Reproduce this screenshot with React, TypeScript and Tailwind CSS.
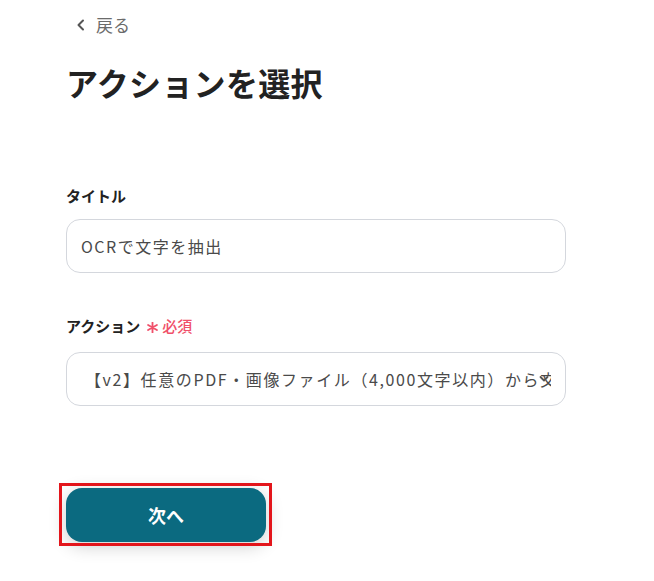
import React from "react";

export default function App() {
  return (
    <div
      className="w-[654px] h-[581px] bg-white overflow-hidden"
      style={{ fontFamily: '"Noto Sans CJK JP", "Noto Sans", sans-serif' }}
    >
      <div className="pl-[66px] pt-[13px]">
        <div className="flex items-center h-[24px] text-[17px] text-[#6b6b6b] pl-[10px] gap-[10px]">
          <svg width="10" height="12" viewBox="0 0 10 12" fill="none">
            <path d="M7 1.5 L2.5 6 L7 10.5" stroke="#555" strokeWidth="2" strokeLinecap="round" strokeLinejoin="round" />
          </svg>
          <span>戻る</span>
        </div>
        <h1 className="mt-[21px] text-[32px] font-bold text-[#222] leading-[48px] tracking-[0.3px]">
          アクションを選択
        </h1>
        <div className="mt-[78px] text-[15px] font-bold text-[#222] leading-[24px]">タイトル</div>
        <div className="mt-[11px] w-[500px] h-[54px] rounded-[14px] border border-[#d4d7dd] flex items-center px-[14px] text-[16px] tracking-[1.5px] text-[#4a4a4a]">
          OCRで文字を抽出
        </div>
        <div className="mt-[41px] flex items-center text-[15px] font-bold leading-[24px]">
          <span className="text-[#222]">アクション</span>
          <svg className="ml-[7px] mt-[3px]" width="11" height="11" viewBox="0 0 12 12" fill="none">
            <path d="M6 0.5 V11.5 M1.2 3.25 L10.8 8.75 M1.2 8.75 L10.8 3.25" stroke="#f0506a" strokeWidth="2" strokeLinecap="round" />
          </svg>
          <span className="ml-[4px] text-[#f0506a] text-[15px] font-medium">必須</span>
        </div>
        <div className="mt-[14px] w-[500px] h-[54px] rounded-[14px] border border-[#d4d7dd] relative overflow-hidden">
          <div className="absolute left-[18px] right-[14px] top-0 bottom-0 flex items-center overflow-hidden whitespace-nowrap text-[16px] tracking-[1.6px] text-[#4a4a4a]">
            【v2】任意のPDF・画像ファイル（4,000文字以内）から文字を抽出
          </div>
          <svg className="absolute left-[472px] top-[22px]" width="10" height="8" viewBox="0 0 10 8" fill="none">
            <path d="M1.5 2 L5 5.5 L8.5 2" stroke="#555" strokeWidth="1.8" strokeLinecap="round" strokeLinejoin="round" />
          </svg>
        </div>
        <div className="mt-[82px] relative w-[200px] h-[54px]">
          <button className="w-[200px] h-[54px] rounded-[16px] bg-[#0b6a80] text-white text-[18px] font-bold shadow-[0_4px_18px_rgba(0,0,0,0.2)]">
            次へ
          </button>
          <span className="absolute left-[-7px] top-[-5px] w-[213px] h-[63px] border-[3px] border-[#e3151b] pointer-events-none" />
        </div>
      </div>
    </div>
  );
}
